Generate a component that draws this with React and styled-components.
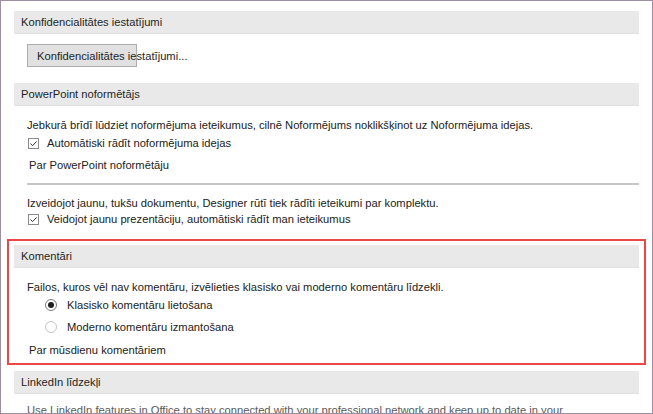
import React from 'react';
import styled, { createGlobalStyle } from 'styled-components';

const GlobalStyle = createGlobalStyle`
  html, body {
    margin: 0;
    padding: 0;
    background: #ffffff;
  }
  body {
    font-family: "Liberation Sans", Arial, sans-serif;
    font-size: 11.2px;
    color: #222222;
  }
`;

const Frame = styled.div`
  width: 653px;
  height: 414px;
  box-sizing: border-box;
  border: 1px solid #9d8fa2;
  overflow: hidden;
  padding: 4px 6px 0;
  background: #fff;
`;

const Section = styled.section`
  border: 2px solid ${({ highlighted }) => (highlighted ? '#ee4646' : 'transparent')};
  padding: 4px 5px;
`;

const Header = styled.div`
  height: 23px;
  box-sizing: border-box;
  background: #e9e9e9;
  border-bottom: 1px solid #e1e1e1;
  padding-left: 7px;
  display: flex;
  align-items: center;
  color: #1f1f1f;
`;

const Body = styled.div`
  padding-left: 13px;
  padding-bottom: ${({ bottom }) => bottom || 0}px;
  display: flex;
  flex-direction: column;
`;

const Row = styled.div`
  height: 16px;
  display: flex;
  align-items: center;
  white-space: nowrap;
  margin-top: ${({ top }) => top || 0}px;
  padding-left: ${({ indent }) => indent || 0}px;
  color: ${({ muted }) => (muted ? '#5a5a5a' : 'inherit')};
`;

const Button = styled.button`
  width: 110px;
  height: 23px;
  margin-top: 10px;
  margin-bottom: 4px;
  box-sizing: border-box;
  background: #e1e1e1;
  border: 1px solid #adadad;
  border-radius: 0;
  padding: 0 0 0 9px;
  text-align: left;
  white-space: nowrap;
  overflow: visible;
  font: inherit;
  color: #1f1f1f;
`;

const Box = styled.span`
  width: 11px;
  height: 11px;
  box-sizing: border-box;
  border: 1px solid #8a8a8a;
  background: #fff;
  margin: 0 8px 0 1px;
  display: inline-flex;
  align-items: center;
  justify-content: center;
  flex-shrink: 0;
`;

const Radio = styled.span`
  width: 12px;
  height: 12px;
  box-sizing: border-box;
  border-radius: 50%;
  border: 1px solid ${({ checked }) => (checked ? '#7a7a7a' : '#c4c4c4')};
  background: #fff;
  margin-right: 10px;
  display: inline-flex;
  align-items: center;
  justify-content: center;
  flex-shrink: 0;

  &::after {
    content: '';
    display: ${({ checked }) => (checked ? 'block' : 'none')};
    width: 6px;
    height: 6px;
    border-radius: 50%;
    background: #1f1f1f;
  }
`;

const Separator = styled.div`
  height: 2px;
  background: #c6c6c6;
  margin: 10px 0 0;
`;

function Check() {
  return (
    <Box>
      <svg width="9" height="9" viewBox="0 0 9 9">
        <path d="M1.5 4.6 L3.6 6.6 L7.6 2.4" fill="none" stroke="#333" strokeWidth="1" />
      </svg>
    </Box>
  );
}

export default function App() {
  return (
    <>
      <GlobalStyle />
      <Frame>
        <Section>
          <Header>Konfidencialitātes iestatījumi</Header>
          <Body>
            <div>
              <Button>Konfidencialitātes iestatījumi...</Button>
            </div>
          </Body>
        </Section>

        <Section>
          <Header>PowerPoint noformētājs</Header>
          <Body bottom={6}>
            <Row top={11}>
              Jebkurā brīdī lūdziet noformējuma ieteikumus, cilnē Noformējums noklikšķinot uz Noformējuma idejas.
            </Row>
            <Row top={2}>
              <Check />
              Automātiski rādīt noformējuma idejas
            </Row>
            <Row top={6} indent={2}>Par PowerPoint noformētāju</Row>
            <Separator />
            <Row top={10}>
              Izveidojot jaunu, tukšu dokumentu, Designer rūtī tiek rādīti ieteikumi par komplektu.
            </Row>
            <Row>
              <Check />
              Veidojot jaunu prezentāciju, automātiski rādīt man ieteikumus
            </Row>
          </Body>
        </Section>

        <Section highlighted>
          <Header>Komentāri</Header>
          <Body bottom={1}>
            <Row top={11}>
              Failos, kuros vēl nav komentāru, izvēlieties klasisko vai moderno komentāru līdzekli.
            </Row>
            <Row top={2} indent={18}>
              <Radio checked />
              Klasisko komentāru lietošana
            </Row>
            <Row top={6} indent={18}>
              <Radio />
              Moderno komentāru izmantošana
            </Row>
            <Row top={7} indent={2}>Par mūsdienu komentāriem</Row>
          </Body>
        </Section>

        <Section>
          <Header>LinkedIn līdzekļi</Header>
          <Body>
            <Row top={8} muted>
              Use LinkedIn features in Office to stay connected with your professional network and keep up to date in your
            </Row>
          </Body>
        </Section>
      </Frame>
    </>
  );
}
